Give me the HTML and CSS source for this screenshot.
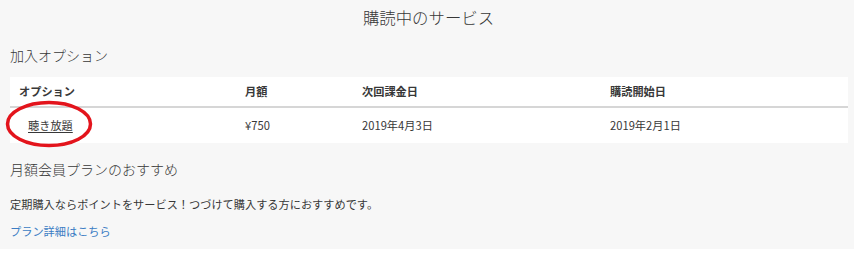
FILE: index.html
```html
<!DOCTYPE html>
<html lang="ja">
<head>
<meta charset="utf-8">
<title>購読中のサービス</title>
<link rel="stylesheet" href="styles.css">
</head>
<body>
<main class="page">
  <h1 class="title">購読中のサービス</h1>
  <h2 class="section-title">加入オプション</h2>
  <div class="panel">
    <div class="grid head">
      <div class="cell">オプション</div>
      <div class="cell">月額</div>
      <div class="cell">次回課金日</div>
      <div class="cell">購読開始日</div>
    </div>
    <div class="grid body-row">
      <div class="cell option-cell"><a class="opt-link" href="#">聴き放題</a>
        <svg class="mark" width="94" height="54" viewBox="0 0 94 54"><ellipse cx="47" cy="26" rx="41.5" ry="21.5" fill="none" stroke="#e3141c" stroke-width="3.5"/></svg>
      </div>
      <div class="cell">¥750</div>
      <div class="cell">2019年4月3日</div>
      <div class="cell">2019年2月1日</div>
    </div>
  </div>
  <h2 class="section-title rec">月額会員プランのおすすめ</h2>
  <p class="desc">定期購入ならポイントをサービス！つづけて購入する方におすすめです。</p>
  <a class="plan-link" href="#">プラン詳細はこちら</a>
</main>
</body>
</html>
```
FILE: styles.css
```css
html, body {
  margin: 0;
  padding: 0;
  background: #ffffff;
}
.page {
  background: #f7f7f7;
  height: 249px;
  padding: 0 6px 0 10px;
  box-sizing: border-box;
  font-family: "Noto Sans CJK JP", "Noto Sans", sans-serif;
  color: #383838;
  display: flex;
  flex-direction: column;
  align-items: flex-start;
}
.title {
  align-self: stretch;
  margin: 0 -6px 0 -10px;
  height: 34px;
  line-height: 34px;
  text-align: center;
  font-size: 16.4px;
  font-weight: 300;
  padding-left: 3px;
}
.section-title {
  margin: 10px 0 0 0;
  font-size: 14px;
  font-weight: 300;
  line-height: 22px;
  height: 22px;
}
.section-title.rec {
  margin-top: 15px;
}
.panel {
  align-self: stretch;
  margin-top: 11px;
  background: #ffffff;
}
.grid {
  display: grid;
  grid-template-columns: 226px 117px 248px 1fr;
}
.head {
  height: 29px;
  border-bottom: 2px solid #d6d6d6;
  font-size: 11.2px;
  font-weight: 700;
  line-height: 29px;
}
.body-row {
  height: 35px;
  font-size: 11.2px;
  line-height: 35px;
}
.cell {
  padding-left: 9px;
  white-space: nowrap;
}
.option-cell {
  position: relative;
  padding-left: 18px;
}
.opt-link {
  color: #383838;
  text-decoration: underline;
  text-underline-offset: 2px;
}
.mark {
  position: absolute;
  left: -8.5px;
  top: -10px;
  pointer-events: none;
}
.desc {
  margin: 15px 0 0 0;
  font-size: 11.2px;
  line-height: 18px;
}
.plan-link {
  margin-top: 9px;
  font-size: 11.2px;
  line-height: 18px;
  color: #3b7dc4;
  text-decoration: none;
}
```
